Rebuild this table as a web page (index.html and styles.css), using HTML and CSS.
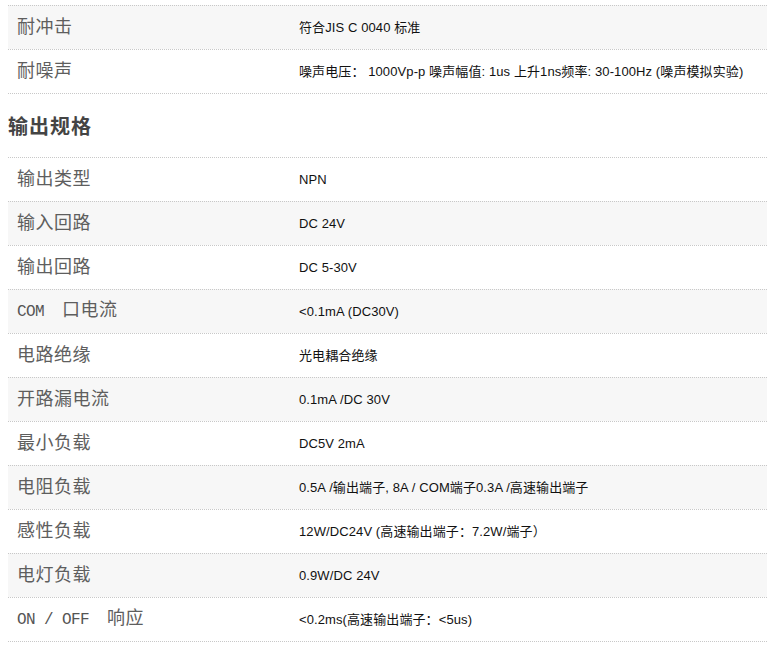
FILE: index.html
```html
<!DOCTYPE html>
<html lang="zh">
<head>
<meta charset="utf-8">
<link rel="stylesheet" href="styles.css">
</head>
<body>
<div class="page">
  <div class="spec">
    <div class="row alt"><div class="label">耐冲击</div><div class="value">符合JIS C 0040 标准</div></div>
    <div class="row"><div class="label">耐噪声</div><div class="value">噪声电压： 1000Vp-p 噪声幅值: 1us 上升1ns频率: 30-100Hz (噪声模拟实验)</div></div>
  </div>
  <h2 class="heading">输出规格</h2>
  <div class="spec">
    <div class="row"><div class="label">输出类型</div><div class="value">NPN</div></div>
    <div class="row alt"><div class="label">输入回路</div><div class="value">DC 24V</div></div>
    <div class="row"><div class="label">输出回路</div><div class="value">DC 5-30V</div></div>
    <div class="row alt"><div class="label"><span class="latin">COM  </span>口电流</div><div class="value">&lt;0.1mA (DC30V)</div></div>
    <div class="row"><div class="label">电路绝缘</div><div class="value">光电耦合绝缘</div></div>
    <div class="row alt"><div class="label">开路漏电流</div><div class="value">0.1mA /DC 30V</div></div>
    <div class="row"><div class="label">最小负载</div><div class="value">DC5V 2mA</div></div>
    <div class="row alt"><div class="label">电阻负载</div><div class="value">0.5A /输出端子, 8A / COM端子0.3A /高速输出端子</div></div>
    <div class="row"><div class="label">感性负载</div><div class="value">12W/DC24V (高速输出端子：7.2W/端子）</div></div>
    <div class="row alt"><div class="label">电灯负载</div><div class="value">0.9W/DC 24V</div></div>
    <div class="row"><div class="label"><span class="latin">ON / OFF  </span>响应</div><div class="value">&lt;0.2ms(高速输出端子：&lt;5us)</div></div>
  </div>
</div>
</body>
</html>
```

FILE: styles.css
```css
html, body {
  margin: 0;
  padding: 0;
  background: #fff;
}
.page {
  padding: 5px 0 0 8px;
  width: 759px;
}
.spec {
  display: flex;
  flex-direction: column;
  border-bottom: 1px dotted #c8c8c8;
}
.row {
  display: grid;
  grid-template-columns: 291px 1fr;
  align-items: center;
  height: 43px;
  border-top: 1px dotted #c8c8c8;
  background: #fff;
}
.row.alt {
  background: #f7f7f7;
}
.label {
  padding-left: 9px;
  font-family: "Liberation Mono", "Noto Sans CJK SC", monospace;
  font-size: 18px;
  letter-spacing: 0.5px;
  color: #5e5e5e;
  line-height: 20px;
  white-space: pre;
}
.latin {
  font-size: 16px;
  letter-spacing: -0.6px;
  color: #555;
}
.value {
  font-family: "Liberation Sans", "Noto Sans CJK SC", sans-serif;
  font-size: 13px;
  letter-spacing: 0.1px;
  color: #111;
  line-height: 16px;
  white-space: nowrap;
}
.heading {
  margin: 0;
  height: 63px;
  display: flex;
  align-items: center;
  font-family: "Noto Sans CJK SC", sans-serif;
  font-size: 20px;
  font-weight: bold;
  letter-spacing: 1px;
  color: #444;
}
```
